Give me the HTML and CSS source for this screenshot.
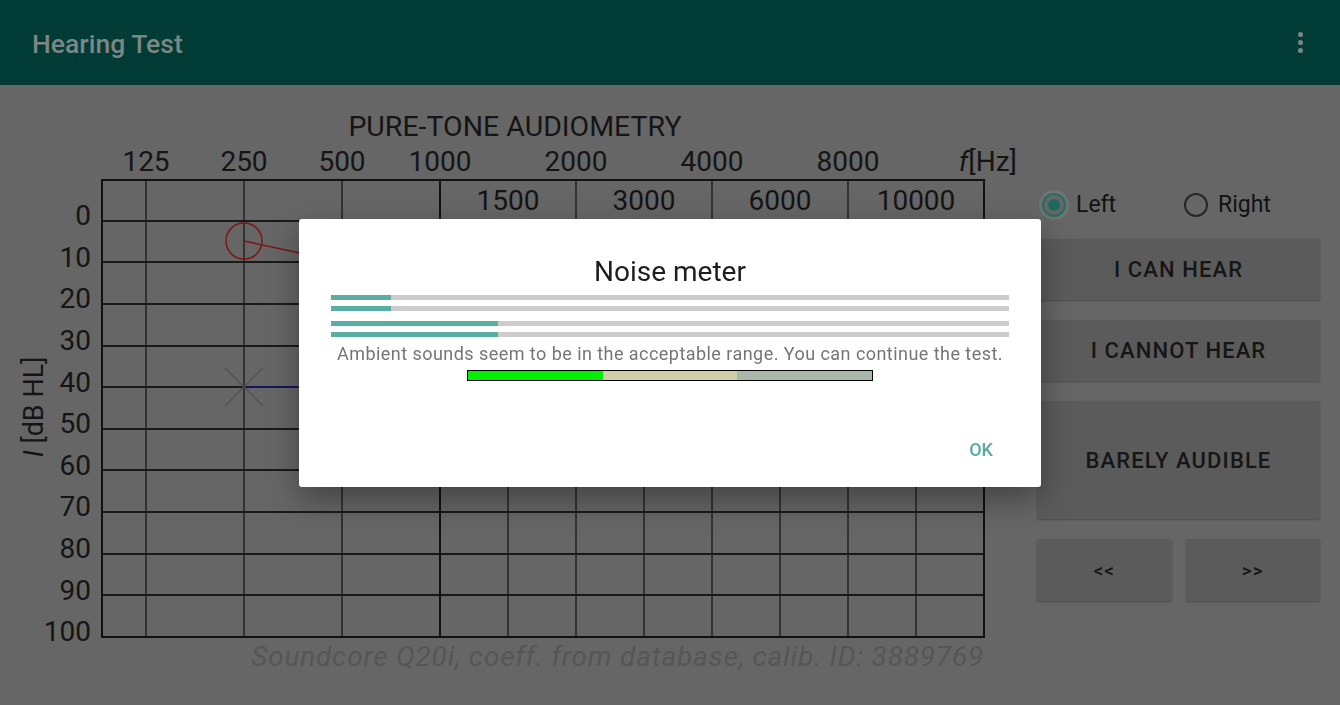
FILE: index.html
```html
<!DOCTYPE html>
<html>
<head>
    <title>Hearing Test</title>
    <meta charset="UTF-8">
    <meta name="viewport" content="width=device-width, initial-scale=1.0">
    <link rel="stylesheet" href="styles.css">
</head>
<body>
    <div class="app">
        <header class="appbar">
            <span class="appbar-title">Hearing Test</span>
            <span class="menu"><i></i><i></i><i></i></span>
        </header>

        <main class="content">
            <div class="chart">
                <svg width="1030" height="620" viewBox="0 85 1030 620">
                    <text class="chart-title" x="515" y="136">PURE-TONE AUDIOMETRY</text>

                    <g class="freq">
                        <text x="146" y="171">125</text>
                        <text x="244" y="171">250</text>
                        <text x="342" y="171">500</text>
                        <text x="440" y="171">1000</text>
                        <text x="576" y="171">2000</text>
                        <text x="712" y="171">4000</text>
                        <text x="848" y="171">8000</text>
                        <text x="508" y="210">1500</text>
                        <text x="644" y="210">3000</text>
                        <text x="780" y="210">6000</text>
                        <text x="916" y="210">10000</text>
                    </g>
                    <text class="unit" x="1017" y="171"><tspan class="it">f</tspan>[Hz]</text>

                    <g class="level">
                        <text x="91" y="225">0</text>
                        <text x="91" y="267">10</text>
                        <text x="91" y="308">20</text>
                        <text x="91" y="350">30</text>
                        <text x="91" y="392">40</text>
                        <text x="91" y="433">50</text>
                        <text x="91" y="475">60</text>
                        <text x="91" y="516">70</text>
                        <text x="91" y="558">80</text>
                        <text x="91" y="600">90</text>
                        <text x="91" y="641">100</text>
                    </g>
                    <text class="axis-y" x="-407" y="43" transform="rotate(-90)"><tspan class="it">I</tspan> [dB HL]</text>

                    <!-- grid -->
                    <path class="grid-h" d="M102 221H984M102 262H984M102 304H984M102 346H984M102 387H984M102 429H984M102 470H984M102 512H984M102 554H984M102 595H984"/>
                    <path class="grid-v" d="M146 180V637M244 180V637M342 180V637M576 180V637M712 180V637M848 180V637M508 221V637M644 221V637M780 221V637M916 221V637"/>
                    <path class="grid-main" d="M440 180V637"/>
                    <rect class="frame" x="102" y="180" width="882" height="457"/>

                    <!-- results -->
                    <path class="line-right" d="M244 241L342 262"/>
                    <circle class="mark-right" cx="244" cy="241" r="18"/>
                    <path class="line-left" d="M244 387H342"/>
                    <path class="mark-left" d="M225 368L263 406M263 368L225 406"/>

                    <text class="device" x="984" y="666">Soundcore Q20i, coeff. from database, calib. ID: 3889769</text>
                </svg>
            </div>

            <aside class="controls">
                <div class="ears">
                    <label class="radio checked"><span class="radio-dot"></span>Left</label>
                    <label class="radio"><span class="radio-dot"></span>Right</label>
                </div>
                <button class="btn">I CAN HEAR</button>
                <button class="btn">I CANNOT HEAR</button>
                <button class="btn btn-tall">BARELY AUDIBLE</button>
                <div class="nav">
                    <button class="btn btn-nav">&lt;&lt;</button>
                    <button class="btn btn-nav">&gt;&gt;</button>
                </div>
            </aside>
        </main>
    </div>

    <div class="overlay">
        <div class="dialog">
            <div class="dialog-title">Noise meter</div>
            <div class="meters">
                <div class="bar"><div class="fill" style="width: 60px;"></div></div>
                <div class="bar"><div class="fill" style="width: 60px;"></div></div>
                <div class="bar pair"><div class="fill" style="width: 167px;"></div></div>
                <div class="bar"><div class="fill" style="width: 167px;"></div></div>
            </div>
            <div class="dialog-msg">Ambient sounds seem to be in the acceptable range. You can continue the test.</div>
            <div class="range">
                <span class="range-ok"></span>
                <span class="range-mid"></span>
                <span class="range-high"></span>
            </div>
            <div class="dialog-actions">
                <button class="text-btn">OK</button>
            </div>
        </div>
    </div>
</body>
</html>
```

FILE: styles.css
```css
body {
    margin: 0;
    background: #666;
    font-family: Roboto, "Noto Sans", sans-serif;
    color: #111;
    overflow: hidden;
}
.app {
    width: 1340px;
    height: 705px;
}
.appbar {
    height: 85px;
    background: #003c35;
    display: flex;
    align-items: center;
    justify-content: space-between;
    padding: 0 37px 0 32px;
}
.appbar-title {
    color: #7b8784;
    font-size: 26.5px;
    font-weight: 500;
    margin-top: 2px;
}
.menu {
    display: flex;
    flex-direction: column;
    gap: 3px;
}
.menu i {
    width: 5px;
    height: 5px;
    border-radius: 50%;
    background: #7a8785;
}
.content {
    display: flex;
}
.chart svg {
    display: block;
}
.chart text {
    font-family: Roboto, sans-serif;
    font-size: 28px;
    fill: #151515;
}
.chart .chart-title {
    font-size: 28.5px;
}
.chart-title,
.freq text {
    text-anchor: middle;
}
.unit {
    text-anchor: end;
}
.it {
    font-style: italic;
}
.level text {
    text-anchor: end;
}
.chart .axis-y {
    font-size: 27px;
    text-anchor: middle;
}
.grid-h {
    stroke: #1a1a1a;
    stroke-width: 2;
    fill: none;
}
.grid-v {
    stroke: #1a1a1a;
    stroke-width: 1.3;
    fill: none;
}
.grid-main,
.frame {
    stroke: #111;
    stroke-width: 2;
    fill: none;
}
.line-right {
    stroke: #7e1414;
    stroke-width: 1.5;
}
.mark-right {
    stroke: #7e1414;
    stroke-width: 1.5;
    fill: none;
}
.line-left {
    stroke: #141470;
    stroke-width: 1.5;
}
.mark-left {
    stroke: #505050;
    stroke-width: 1.2;
}
.chart .device {
    font-size: 28px;
    letter-spacing: 0.8px;
    font-style: italic;
    text-anchor: end;
    fill: #565656;
}

.controls {
    width: 283px;
    margin-left: 7px;
    padding-top: 105px;
    display: flex;
    flex-direction: column;
    gap: 20px;
}
.ears {
    height: 29px;
    display: grid;
    grid-template-columns: 142px 142px;
    align-items: center;
}
.radio {
    display: flex;
    align-items: center;
    gap: 10px;
    font-size: 23px;
    color: #121212;
}
.radio-dot {
    width: 24px;
    height: 24px;
    margin-left: 5px;
    box-sizing: border-box;
    border: 2px solid #262626;
    border-radius: 50%;
    display: flex;
    align-items: center;
    justify-content: center;
}
.checked .radio-dot {
    border-color: #2b6c63;
    box-shadow: 0 0 0 3px rgba(120, 150, 145, 0.35);
}
.checked .radio-dot::after {
    content: "";
    width: 12px;
    height: 12px;
    border-radius: 50%;
    background: #1f6a5f;
}
.btn {
    height: 61px;
    border: none;
    border-radius: 2px;
    background: #5b5b5b;
    box-shadow: 0 1px 2px rgba(0, 0, 0, 0.25);
    font-family: Roboto, sans-serif;
    font-size: 22px;
    font-weight: 500;
    letter-spacing: 1.1px;
    color: #161616;
    padding: 0;
}
.btn-tall {
    height: 118px;
}
.nav {
    display: grid;
    grid-template-columns: 1fr 1fr;
    gap: 14px;
}
.btn-nav {
    height: 62px;
    font-size: 19px;
}

.overlay {
    position: fixed;
    inset: 0;
    display: flex;
    align-items: center;
    justify-content: center;
}
.dialog {
    width: 742px;
    height: 268px;
    box-sizing: border-box;
    padding: 38px 32px 0;
    background: #fff;
    border-radius: 3px;
    box-shadow: 0 12px 32px rgba(0, 0, 0, 0.35);
}
.dialog-title {
    text-align: center;
    font-size: 28px;
    line-height: 30px;
    color: #1e1e1e;
}
.meters {
    margin-top: 8px;
    display: flex;
    flex-direction: column;
    gap: 6px;
}
.bar {
    height: 5px;
    background: #cccccc;
}
.bar.pair {
    margin-top: 4px;
}
.fill {
    height: 100%;
    background: #58aea3;
}
.dialog-msg {
    margin-top: 7px;
    text-align: center;
    font-size: 18px;
    letter-spacing: 0.45px;
    line-height: 20px;
    color: #757575;
    white-space: nowrap;
}
.range {
    width: 406px;
    height: 11px;
    margin: 6px auto 0;
    box-sizing: border-box;
    border: 1px solid #000;
    display: flex;
}
.range span {
    flex: 1;
}
.range-ok { background: #00ee00; }
.range-mid { background: #cfcfa8; }
.range-high { background: #a9b9a9; }
.dialog-actions {
    margin-top: 51px;
    display: flex;
    justify-content: flex-end;
    margin-right: 8px;
}
.text-btn {
    height: 36px;
    padding: 0 8px;
    border: none;
    background: none;
    font-family: Roboto, sans-serif;
    font-size: 18px;
    font-weight: 500;
    color: #58aa9f;
}
```
